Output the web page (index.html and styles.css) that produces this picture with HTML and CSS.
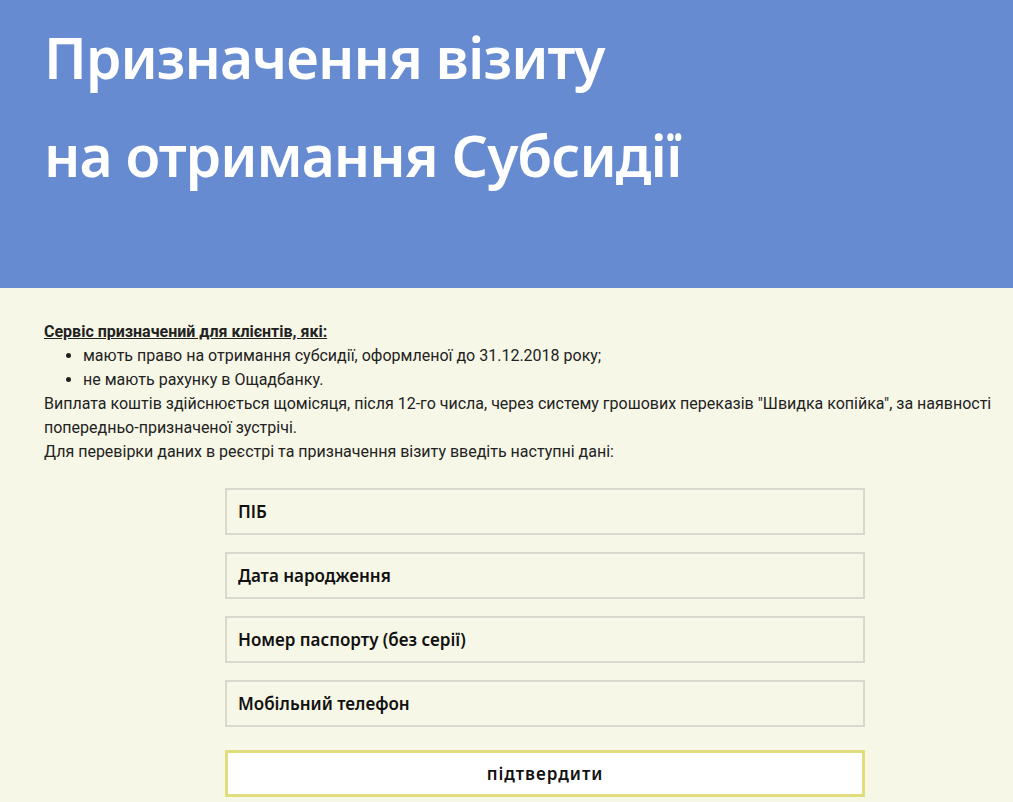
FILE: index.html
```html
<!DOCTYPE html>
<html lang="uk">
<head>
    <meta charset="UTF-8">
    <meta name="viewport" content="width=device-width, initial-scale=1.0">
    <title>Призначення візиту</title>
    <link rel="stylesheet" href="styles.css">
</head>
<body>
    <header class="hero">
        <h1 class="hero-title">Призначення візиту<br>на отримання Субсидії</h1>
    </header>
    <main class="content">
        <div class="info">
            <span class="info-head">Сервіс призначений для клієнтів, які:</span>
            <ul class="info-list">
                <li>мають право на отримання субсидії, оформленої до 31.12.2018 року;</li>
                <li>не мають рахунку в Ощадбанку.</li>
            </ul>
            Виплата коштів здійснюється щомісяця, після 12-го числа, через систему грошових переказів "Швидка копійка", за наявності попередньо-призначеної зустрічі.<br>
            Для перевірки даних в реєстрі та призначення візиту введіть наступні дані:
        </div>
        <form class="visit-form">
            <input class="field" type="text" placeholder="ПІБ">
            <input class="field" type="text" placeholder="Дата народження">
            <input class="field" type="text" placeholder="Номер паспорту (без серії)">
            <input class="field" type="text" placeholder="Мобільний телефон">
            <button class="submit" type="button">підтвердити</button>
        </form>
    </main>
</body>
</html>
```

FILE: styles.css
```css
body {
    margin: 0;
    padding: 0;
    background: #f7f7e7;
    font-family: Roboto, "Liberation Sans", sans-serif;
    color: #222;
}

.hero {
    background: #668bd0;
    height: 288px;
    padding: 8px 0 0 44px;
    box-sizing: border-box;
}

.hero-title {
    margin: 0;
    font-family: "Noto Sans", sans-serif;
    font-weight: 600;
    font-size: 57px;
    letter-spacing: -1px;
    line-height: 98px;
    color: #fff;
}

.content {
    padding: 32px 8px 0 44px;
}

.info {
    font-size: 16px;
    line-height: 24px;
}

.info-head {
    font-weight: bold;
    text-decoration: underline;
}

.info-list {
    margin: 0;
    padding-left: 39px;
}

.visit-form {
    width: 640px;
    margin: 24px 0 0 181px;
    display: flex;
    flex-direction: column;
    gap: 17px;
}

.field,
.submit {
    height: 47px;
    box-sizing: border-box;
    font-family: "Noto Sans", sans-serif;
    font-weight: 600;
    font-size: 17px;
    color: #111;
    outline: none;
}

.field {
    background: #f7f7e7;
    border: 2px solid #d9d9d0;
    padding: 0 11px;
}

.field::placeholder {
    color: #111;
    opacity: 1;
}

.submit {
    margin-top: 6px;
    background: #fff;
    border: 3px solid #e2dd7c;
    letter-spacing: 1px;
    cursor: pointer;
}
```
